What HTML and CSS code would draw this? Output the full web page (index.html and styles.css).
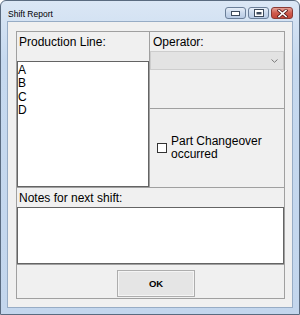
FILE: index.html
```html
<!DOCTYPE html>
<html lang="en">
<head>
    <meta charset="UTF-8">
    <link rel="stylesheet" href="styles.css">
    <title>Shift Report</title>
</head>
<body>
    <div class="window">
        <div class="titlebar">
            <span class="title">Shift Report</span>
            <div class="caption">
                <span class="cbtn">
                    <svg width="9" height="5" viewBox="0 0 9 5"><rect x="0.5" y="0.5" width="8" height="4" fill="#fff" stroke="#3c4a5c"/></svg>
                </span>
                <span class="cbtn">
                    <svg width="10" height="8" viewBox="0 0 10 8"><rect x="0.5" y="0.5" width="9" height="7" fill="#fff" stroke="#3c4a5c"/><rect x="2.5" y="3" width="5" height="2.5" fill="#3c4a5c"/></svg>
                </span>
                <span class="cbtn close">
                    <svg width="11" height="9" viewBox="0 0 11 9"><path d="M2 1.5 L9 7.5 M9 1.5 L2 7.5" stroke="#5a2020" stroke-width="3.2" stroke-linecap="square"/><path d="M2 1.5 L9 7.5 M9 1.5 L2 7.5" stroke="#fff" stroke-width="1.6" stroke-linecap="square"/></svg>
                </span>
            </div>
        </div>
        <div class="client">
            <div class="table">
                <div class="top">
                    <div class="col left">
                        <div class="label">Production Line:</div>
                        <ul class="listbox">
                            <li>A</li>
                            <li>B</li>
                            <li>C</li>
                            <li>D</li>
                        </ul>
                    </div>
                    <div class="col right">
                        <div class="operator">
                            <div class="label">Operator:</div>
                            <div class="combo">
                                <svg width="7" height="4" viewBox="0 0 7 4"><path d="M0.5 0.5 L3.5 3.3 L6.5 0.5" fill="none" stroke="#7a7a7a" stroke-width="1"/></svg>
                            </div>
                        </div>
                        <div class="check-cell">
                            <span class="checkbox"></span>
                            <span class="check-text">Part Changeover<br>occurred</span>
                        </div>
                    </div>
                </div>
                <div class="notes">
                    <div class="label">Notes for next shift:</div>
                    <div class="textbox"></div>
                </div>
                <div class="buttons">
                    <button class="ok">OK</button>
                </div>
            </div>
        </div>
    </div>
</body>
</html>
```

FILE: styles.css
```css
*{
    padding: 0;
    margin: 0;
    box-sizing: border-box;
}
body{
    background: #fff;
    font-family: "Liberation Sans", Arial, sans-serif;
    width: 300px;
    height: 315px;
    overflow: hidden;
}
.window{
    width: 300px;
    height: 315px;
    border: 1px solid #5a6b80;
    border-radius: 6px 6px 0 0;
    background: linear-gradient(#dbe7f5, #c6d9ef 60px, #c3d6ed);
    padding: 0 6px 6px 6px;
    display: flex;
    flex-direction: column;
}
.titlebar{
    height: 20px;
    padding-top: 5px;
    display: flex;
    align-items: center;
    justify-content: space-between;
}
.title{
    font-size: 8.5px;
    color: #000;
    padding-left: 1px;
}
.caption{
    display: flex;
    gap: 2px;
    align-self: flex-start;
    margin-top: 1px;
}
.cbtn{
    width: 21px;
    height: 12px;
    border: 1px solid #6b7f99;
    border-radius: 3px;
    background: linear-gradient(#e6eef8, #c9d8ec 50%, #b8cbe4);
    display: flex;
    align-items: center;
    justify-content: center;
}
.cbtn.close{
    width: 22px;
    border-color: #8a3a34;
    background: linear-gradient(#e5a196, #cf5a4c 50%, #c4473a);
}
.client{
    width: 286px;
    height: 287px;
    border: 1px solid #97acc5;
    background: #f0f0f0;
    padding: 9px 7px 0 8px;
}
.table{
    width: 269px;
    height: 268px;
    border: 1px solid #a0a0a0;
    background: #a0a0a0;
    display: flex;
    flex-direction: column;
    gap: 1px;
}
.label{
    font-size: 12px;
    line-height: 14px;
    color: #000;
    padding: 3px 0 0 2px;
}
.top{
    height: 155px;
    display: flex;
    gap: 1px;
}
.col{
    background: #f0f0f0;
    display: flex;
    flex-direction: column;
}
.left{
    width: 132px;
}
.left .label{
    height: 29px;
}
.listbox{
    flex: 1;
    list-style: none;
    background: #fff;
    border: 1px solid #646464;
    padding-top: 2px;
    font-size: 12px;
    line-height: 13.33px;
}
.right{
    width: 134px;
    background: #a0a0a0;
    gap: 1px;
}
.operator{
    height: 76px;
    background: #f0f0f0;
}
.operator .label{
    height: 19px;
    padding-left: 3px;
}
.combo{
    height: 19px;
    background: #e3e3e3;
    border: 1px solid #cdcdcd;
    display: flex;
    align-items: center;
    justify-content: flex-end;
    padding-right: 5px;
}
.check-cell{
    flex: 1;
    background: #f0f0f0;
    display: flex;
    align-items: center;
    padding-left: 7px;
    gap: 4px;
}
.checkbox{
    width: 10px;
    height: 10px;
    border: 1px solid #333;
    background: #fff;
    flex-shrink: 0;
}
.check-text{
    font-size: 12px;
    line-height: 13px;
    color: #000;
}
.notes{
    height: 76px;
    background: #f0f0f0;
    display: flex;
    flex-direction: column;
}
.notes .label{
    height: 19px;
    padding-top: 3px;
}
.textbox{
    flex: 1;
    background: #fff;
    border: 1px solid #646464;
}
.buttons{
    height: 33px;
    background: #f0f0f0;
    padding: 5px 0 0 100px;
}
.ok{
    width: 78px;
    height: 27px;
    border: 1px solid #adadad;
    background: #e5e5e5;
    font-family: "Liberation Sans", Arial, sans-serif;
    font-size: 9.5px;
    font-weight: bold;
    color: #000;
    box-shadow: inset 0 0 0 1px #f4f4f4;
}
```
